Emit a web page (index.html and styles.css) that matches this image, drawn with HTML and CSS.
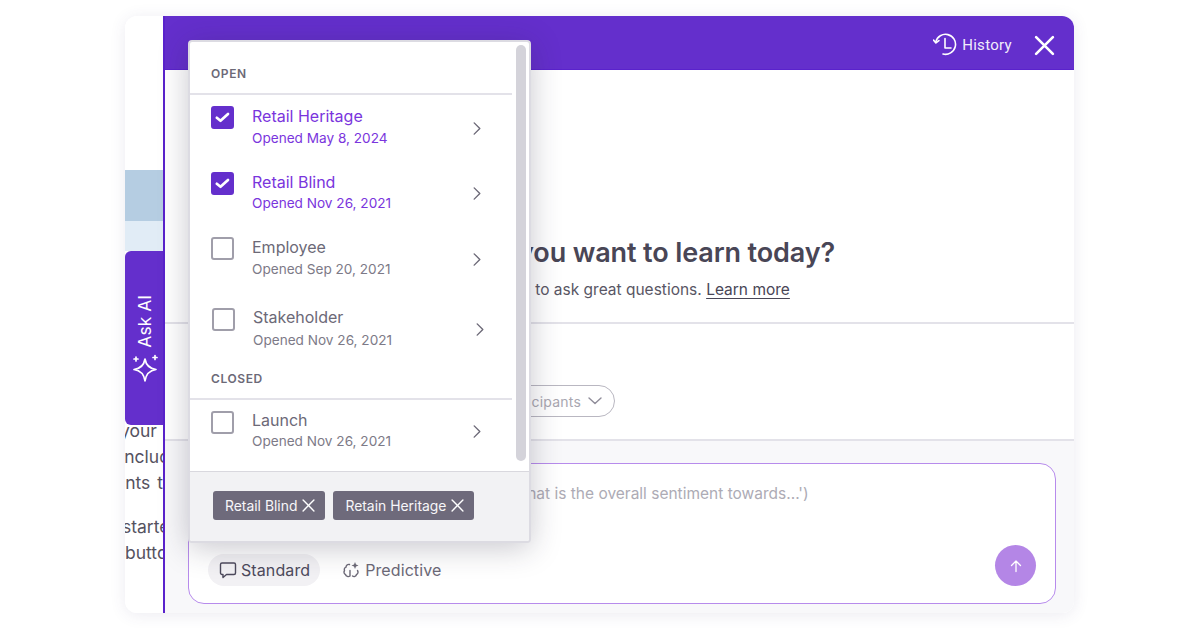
FILE: index.html
```html
<!DOCTYPE html>
<html lang="en">
<head>
<meta charset="utf-8">
<title>Ask AI</title>
<link rel="stylesheet" href="styles.css">
</head>
<body>
<div class="stage">
  <div class="card">
    <aside class="side">
      <div class="band-dark"></div>
      <div class="band-light"></div>
      <div class="ask">
        <svg class="spark" viewBox="0 0 28 28" fill="none" stroke="#fff" stroke-width="1.7" stroke-linejoin="round" stroke-linecap="round"><path d="M14 5C15 11 18 14.500 25 15.500 18 16.500 15 20 14 27 13 20 10 16.500 3 15.500 10 14.500 13 11 14 5z"/><path d="M5 3v4M3 5h4M24 1.500v4M22 3.500h4"/></svg>
        <span class="ask-label">Ask AI</span>
      </div>
      <div class="side-text">
        <p>your data</p>
        <p>includes</p>
        <p>ents to</p>
        <p>started</p>
        <p>button</p>
      </div>
    </aside>
    <main class="panel">
      <header class="head">
        <span class="history">
          <svg class="hist-ico" viewBox="0 0 24 24" fill="none" stroke="#fff" stroke-width="1.600" stroke-linecap="round" stroke-linejoin="round"><path d="M2.800 10A10 10 0 1 1 10 22"/><path d="M.5 8l2.400 3 3-2.400"/><path d="M12 6.500V16h6"/></svg>
          History
        </span>
        <svg class="close" viewBox="0 0 20 20" fill="none" stroke="#fff" stroke-width="2.500" stroke-linecap="round"><path d="M2 2l16 16M18 2L2 18"/></svg>
      </header>
      <section class="hero">
        <h1>What do you want to learn today?</h1>
        <p class="sub">Select a project and use AI to ask great questions. <a href="#">Learn more</a></p>
      </section>
      <section class="filters">
        <span class="pill">All participants
          <svg class="pill-ico" viewBox="0 0 16 10" fill="none" stroke="#8f8c99" stroke-width="1.400" stroke-linecap="round" stroke-linejoin="round"><path d="M2 2l6 5.500L14 2"/></svg>
        </span>
      </section>
      <section class="compose">
        <div class="box">
          <p class="ph">Ask a question about your projects (e.g. 'What is the overall sentiment towards...')</p>
          <div class="box-foot">
            <div class="modes">
              <span class="mode on">
                <svg class="mode-ico" viewBox="0 0 18 18" fill="none" stroke="#4d4a5c" stroke-width="1.400" stroke-linejoin="round"><path d="M3 2h12a1.500 1.500 0 0 1 1.500 1.500v8.500a1.500 1.500 0 0 1-1.500 1.500H7.500L4 16.500v-3H3A1.500 1.500 0 0 1 1.500 12V3.500A1.500 1.500 0 0 1 3 2z"/></svg>
                Standard
              </span>
              <span class="mode">
                <svg class="mode-ico" viewBox="0 0 18 18" fill="none" stroke="#6c6977" stroke-width="1.400" stroke-linecap="round" stroke-linejoin="round"><path d="M7.500 3.500C5.500 3 4 4.500 4 6.200 2.500 6.700 2 8.200 2.500 9.500 1.500 11 2 13 3.500 13.500 4 15.500 6.500 16.200 8 15V9.500"/><path d="M10.500 15c1.500 1.200 3.500.5 4-1.500 1.500-.5 2-2.500 1-4"/><path d="M13 1l1 2.500 2.500 1-2.500 1-1 2.500-1-2.500-2.500-1 2.500-1z" fill="#6c6977" stroke="none"/></svg>
                Predictive
              </span>
            </div>
            <span class="send">
              <svg class="send-ico" viewBox="0 0 14 14" fill="none" stroke="#fff" stroke-width="1.300" stroke-linecap="round" stroke-linejoin="round"><path d="M7 12.500V2M2.500 6.500 7 2l4.500 4.500"/></svg>
            </span>
          </div>
        </div>
      </section>
    </main>

    <div class="menu">
      <div class="scroll">
        <div class="list">
          <h2 class="group">OPEN</h2>
          <div class="row row-a checked">
            <span class="check"><svg viewBox="0 0 19 19" fill="none" stroke="#fff" stroke-width="2.700" stroke-linecap="round" stroke-linejoin="round"><path d="M3.800 9.800l3.700 3L15 6"/></svg></span>
            <div class="txt"><div class="name">Retail Heritage</div><div class="date">Opened May 8, 2024</div></div>
            <svg class="chev" viewBox="0 0 10 16" fill="none" stroke="#6c6977" stroke-width="1.500" stroke-linecap="round" stroke-linejoin="round"><path d="M2 2l6 6-6 6"/></svg>
          </div>
          <div class="row row-b checked">
            <span class="check"><svg viewBox="0 0 19 19" fill="none" stroke="#fff" stroke-width="2.700" stroke-linecap="round" stroke-linejoin="round"><path d="M3.800 9.800l3.700 3L15 6"/></svg></span>
            <div class="txt"><div class="name">Retail Blind</div><div class="date">Opened Nov 26, 2021</div></div>
            <svg class="chev" viewBox="0 0 10 16" fill="none" stroke="#6c6977" stroke-width="1.500" stroke-linecap="round" stroke-linejoin="round"><path d="M2 2l6 6-6 6"/></svg>
          </div>
          <div class="row row-c">
            <span class="check"></span>
            <div class="txt"><div class="name">Employee</div><div class="date">Opened Sep 20, 2021</div></div>
            <svg class="chev" viewBox="0 0 10 16" fill="none" stroke="#6c6977" stroke-width="1.500" stroke-linecap="round" stroke-linejoin="round"><path d="M2 2l6 6-6 6"/></svg>
          </div>
          <div class="row row-d">
            <span class="check"></span>
            <div class="txt"><div class="name">Stakeholder</div><div class="date">Opened Nov 26, 2021</div></div>
            <svg class="chev" viewBox="0 0 10 16" fill="none" stroke="#6c6977" stroke-width="1.500" stroke-linecap="round" stroke-linejoin="round"><path d="M2 2l6 6-6 6"/></svg>
          </div>
          <h2 class="group">CLOSED</h2>
          <div class="row row-e">
            <span class="check"></span>
            <div class="txt"><div class="name">Launch</div><div class="date">Opened Nov 26, 2021</div></div>
            <svg class="chev" viewBox="0 0 10 16" fill="none" stroke="#6c6977" stroke-width="1.500" stroke-linecap="round" stroke-linejoin="round"><path d="M2 2l6 6-6 6"/></svg>
          </div>
        </div>
        <div class="thumb"></div>
      </div>
      <div class="tags">
        <span class="tag">Retail Blind <svg viewBox="0 0 12 12" fill="none" stroke="#fff" stroke-width="1.300" stroke-linecap="round"><path d="M1 1l10 10M11 1L1 11"/></svg></span>
        <span class="tag">Retain Heritage <svg viewBox="0 0 12 12" fill="none" stroke="#fff" stroke-width="1.300" stroke-linecap="round"><path d="M1 1l10 10M11 1L1 11"/></svg></span>
      </div>
    </div>
  </div>
</div>
</body>
</html>
```
FILE: styles.css
```css
* { box-sizing: border-box; }
html, body { margin: 0; height: 100%; background: #fff; }
body { font-family: Inter, "Liberation Sans", sans-serif; overflow: hidden; }
p, h1, h2 { margin: 0; }

.stage { width: 1200px; height: 628px; padding: 16px 126px 15px 125px; }
.card {
  position: relative; display: flex; height: 597px; border-radius: 12px; background: #fff;
  box-shadow: 0 2px 16px rgba(70, 60, 120, .10);
}

/* left sliver */
.side { position: relative; width: 38px; flex: none; overflow: hidden; border-radius: 12px 0 0 12px; background: #fff; padding-top: 154px; }
.band-dark { height: 51px; background: #b5cde2; }
.band-light { height: 30px; background: #e1ecf6; }
.ask {
  position: absolute; left: 0; top: 235px; width: 38px; height: 174px;
  background: #642fcc; border-radius: 6px 0 0 6px;
  display: flex; flex-direction: column-reverse; align-items: center; padding-bottom: 43px; gap: 6px;
}
.ask-label { writing-mode: vertical-rl; transform: rotate(180deg); color: #fff; font-size: 17.5px; line-height: 20px; white-space: nowrap; margin-left: 2px; }
.spark { width: 28px; height: 28px; flex: none; margin-left: 2px; }
.side-text { position: absolute; top: 402px; left: -20px; width: 58px; color: #55525f; font-size: 17.5px; line-height: 26px; white-space: nowrap; word-spacing: 2px; overflow: hidden; }
.side-text p { height: 26px; }
.side-text p:nth-child(1) { margin-left: 15px; }
.side-text p:nth-child(2) { margin-left: 15px; }
.side-text p:nth-child(3) { margin-left: 10px; }
.side-text p:nth-child(4) { margin-left: 17px; margin-top: 18px; }
.side-text p:nth-child(5) { margin-left: 20px; }

/* main panel */
.panel { flex: 1; display: flex; flex-direction: column; border-left: 2px solid #5a22cc; border-radius: 0 12px 12px 0; overflow: hidden; background: #fff; }
.head { height: 54px; flex: none; background: #642fcc; border-bottom: 1px solid #5a22cc; display: flex; align-items: center; justify-content: flex-end; padding: 5px 19px 0 0; color: #f1ecfb; font-size: 15px; font-family: Roboto, sans-serif; gap: 22px; }
.history { display: flex; align-items: center; gap: 5px; letter-spacing: .3px; }
.hist-ico { width: 24px; height: 24px; margin-top: -2px; }
.close { width: 21px; height: 21px; }
.hero { height: 254px; flex: none; border-bottom: 2px solid #e3e2e9; position: relative; }
.hero h1 { position: absolute; left: 238px; top: 167px; font-size: 27px; line-height: 32px; font-weight: 600; color: #494656; white-space: nowrap; letter-spacing: -.12px; }
.sub { position: absolute; left: 170px; top: 209px; font-size: 15.5px; line-height: 22px; color: #595664; white-space: nowrap; }
.sub a { color: #494656; text-decoration: underline; text-underline-offset: 3px; }
.filters { height: 117px; flex: none; border-bottom: 2px solid #e3e2e9; position: relative; }
.pill { position: absolute; right: 459px; top: 61px; height: 32px; border: 1px solid #b9b7c1; border-radius: 16px; display: flex; align-items: center; gap: 6px; padding: 0 11px 0 13px; color: #a9a7b1; font-size: 14px; letter-spacing: .2px; white-space: nowrap; }
.pill-ico { width: 16px; height: 10px; }
.compose { flex: 1; background: #f8f8fa; padding: 22px 18px 8px 23px; min-height: 0; }
.box { height: 141px; border: 1px solid #b78bec; border-radius: 16px; background: #fff; display: flex; flex-direction: column; justify-content: space-between; padding: 20px 19px 17px 19px; }
.ph { color: #adabb5; font-size: 15.5px; line-height: 20px; white-space: nowrap; padding-left: 3px; }
.box-foot { display: flex; align-items: flex-end; justify-content: space-between; }
.modes { display: flex; gap: 11px; }
.mode { height: 32px; border-radius: 16px; display: flex; align-items: center; gap: 4px; padding: 0 10px 0 11px; font-size: 16px; color: #6c6977; letter-spacing: .1px; }
.mode + .mode { gap: 5px; }
.mode.on { background: #f2f1f4; color: #4d4a5c; }
.mode-ico { width: 18px; height: 18px; }
.send { width: 41px; height: 41px; border-radius: 50%; background: #b486e6; display: flex; align-items: center; justify-content: center; }
.send-ico { width: 14px; height: 14px; }

/* dropdown */
.menu {
  position: absolute; left: 63px; top: 24px; width: 343px; height: 503px;
  border: 2px solid #dcdbe2; border-radius: 4px; background: #fff;
  box-shadow: 0 5px 30px rgba(40, 35, 60, .25);
  display: flex; flex-direction: column; overflow: hidden;
}
.scroll { height: 429px; flex: none; position: relative; }
.list { width: 322px; padding-top: 24px; }
.group { font-size: 12px; line-height: 16px; font-weight: 600; color: #6c6977; letter-spacing: .6px; padding-left: 21px; height: 29px; border-bottom: 2px solid #e3e2e9; }
.row { display: flex; align-items: flex-start; padding: 11px 0 0 21px; }
.row-a { height: 66px; }
.row-b { height: 65px; }
.row-c { height: 71px; }
.row-d { height: 74px; padding-left: 22px; }
.row-e { height: 60px; padding-top: 10px; }
.check { width: 23px; height: 23px; flex: none; border: 2px solid #a09eaa; border-radius: 3px; background: #fff; }
.row-e .check { margin-top: 1px; }
.checked .check { background: #642fcc; border-color: #642fcc; }
.check svg { display: block; width: 19px; height: 19px; }
.txt { margin-left: 18px; flex: 1; }
.row-d .name { margin-top: -1px; }
.name { font-size: 16px; line-height: 20px; color: #6c6977; white-space: nowrap; }
.date { font-size: 13.6px; line-height: 18px; margin-top: 3px; color: #7d7a87; white-space: nowrap; }
.row-b .date, .row-e .date { margin-top: 2px; }
.row-d .date { margin-top: 4px; }
.checked .name, .checked .date { color: #7a35dd; }
.chev { width: 10px; height: 15px; margin: 15px 30px 0 0; flex: none; }
.row-b .chev { margin-top: 14px; }
.row-d .chev { margin-right: 27px; margin-top: 14px; }
.row-e .chev { margin-top: 14px; }
.thumb { position: absolute; right: 3px; top: 3px; width: 10px; height: 416px; background: #d4d3da; border-radius: 5px; }
.tags { flex: 1; background: #f2f2f4; border-top: 1px solid #d9d8de; padding: 19px 0 0 23px; display: flex; gap: 8px; align-items: flex-start; }
.tag { height: 29px; background: #6e6a7b; border-radius: 3px; color: #f7f6f9; font-size: 13.9px; display: flex; align-items: center; gap: 5px; padding: 0 10px 0 12px; white-space: nowrap; }
.tag svg { width: 13px; height: 13px; }
```
